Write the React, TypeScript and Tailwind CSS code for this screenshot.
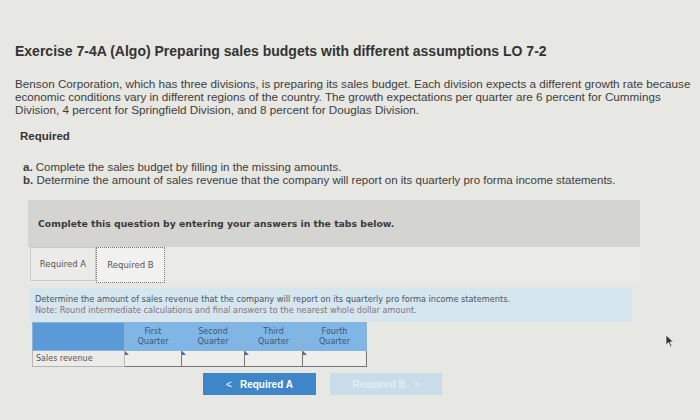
import React from "react";

const sans = { fontFamily: '"Liberation Sans", Arial, sans-serif' };
const verdana = { fontFamily: '"DejaVu Sans", Verdana, sans-serif' };

function Cursor() {
  return (
    <svg width="10" height="14" viewBox="0 0 10 14" className="absolute left-[665px] top-[334px]">
      <path d="M1 1 L1 11 L3.5 8.5 L5.5 13 L7 12.3 L5 8 L8.5 8 Z" fill="#333" stroke="#eee" strokeWidth="0.8" />
    </svg>
  );
}

export default function App() {
  const quarters = [
    ["First", "Quarter", "w-[57px]"],
    ["Second", "Quarter", "w-[63px]"],
    ["Third", "Quarter", "w-[58px]"],
    ["Fourth", "Quarter", "w-[64px]"],
  ];

  return (
    <main className="relative h-[420px] w-[700px] overflow-hidden bg-[#e7e7e3] text-[#3a3a3a]">
      <div className="px-[15px] pt-[41px]" style={sans}>
        <h1 className="whitespace-nowrap text-[14px] font-bold text-[#333]">
          Exercise 7-4A (Algo) Preparing sales budgets with different assumptions LO 7-2
        </h1>

        <p className="mt-[15px] whitespace-nowrap text-[11.7px] leading-[13px] text-[#3d3d3d]">
          Benson Corporation, which has three divisions, is preparing its sales budget. Each division expects a different growth rate because
          <br />
          economic conditions vary in different regions of the country. The growth expectations per quarter are 6 percent for Cummings
          <br />
          Division, 4 percent for Springfield Division, and 8 percent for Douglas Division.
        </p>

        <h2 className="mt-[12px] pl-[5px] text-[11.5px] font-bold text-[#333]">Required</h2>

        <ol className="mt-[16px] pl-[8px] text-[11.5px] leading-[13px] text-[#3d3d3d]">
          <li>
            <span className="font-bold">a.</span> Complete the sales budget by filling in the missing amounts.
          </li>
          <li>
            <span className="font-bold">b.</span> Determine the amount of sales revenue that the company will report on its quarterly pro forma income statements.
          </li>
        </ol>
      </div>

      <div className="ml-[28px] mt-[13px] w-[612px]">
        <div className="flex h-[47px] items-center bg-[#d4d4d1] pl-[10px]" style={verdana}>
          <span className="text-[9.3px] font-bold text-[#3a3a3a]">
            Complete this question by entering your answers in the tabs below.
          </span>
        </div>

        <div className="flex bg-[#eaeae7] pl-[2px]" style={verdana}>
          <div className="flex h-[34px] w-[66px] items-center justify-center border border-[#c9c9c9] bg-[#ebebe9] text-[8.5px] text-[#555]">
            Required A
          </div>
          <div className="flex h-[36px] w-[69px] items-center justify-center border border-dotted border-[#777] bg-[#f1f1ef] text-[8.5px] text-[#555]">
            Required B
          </div>
        </div>

        <div className="ml-[2px] mt-[5px] h-[34px] w-[602px] bg-[#d5e6ee] px-[5px] pt-[6px] text-[8.2px] leading-[11px]" style={verdana}>
          <p className="text-[#4d5560]">
            Determine the amount of sales revenue that the company will report on its quarterly pro forma income statements.
          </p>
          <p className="text-[#8a7077]">
            Note: Round intermediate calculations and final answers to the nearest whole dollar amount.
          </p>
        </div>

        <table className="ml-[4px] border-collapse text-[8px]" style={verdana}>
          <thead>
            <tr className="h-[28px]">
              <th className="w-[92px] border border-[#8fb3d3] bg-[#5a9ad8]" />
              {quarters.map(([a, b, w]) => (
                <th key={a} className={`${w} border border-[#8fb3d3] bg-[#7fb6e6] font-normal leading-[10px] text-[#3c5573]`}>
                  {a}
                  <br />
                  {b}
                </th>
              ))}
            </tr>
          </thead>
          <tbody>
            <tr className="h-[16px]">
              <td className="border border-[#b5b5b5] bg-[#ebebe9] pl-[3px] text-[#555]">Sales revenue</td>
              {quarters.map(([a]) => (
                <td key={a} className="relative border border-[#777] bg-[#eeeeec]">
                  <span className="absolute left-0 top-0 h-0 w-0 border-l-[4px] border-t-[4px] border-l-[#3f6fa8] border-t-transparent" />
                </td>
              ))}
            </tr>
          </tbody>
        </table>

        <div className="mt-[6px] flex gap-[14px] pl-[175px]" style={sans}>
          <button className="flex h-[22px] w-[113px] items-center justify-center gap-[8px] bg-[#3f86c9] text-[10px] font-bold text-white">
            <span className="font-normal">&lt;</span> Required A
          </button>
          <button className="flex h-[22px] w-[112px] items-center justify-center gap-[8px] bg-[#c8dcea] text-[10px] font-bold text-[#e3edf5]">
            Required B <span className="font-normal">&gt;</span>
          </button>
        </div>
      </div>

      <Cursor />
    </main>
  );
}
